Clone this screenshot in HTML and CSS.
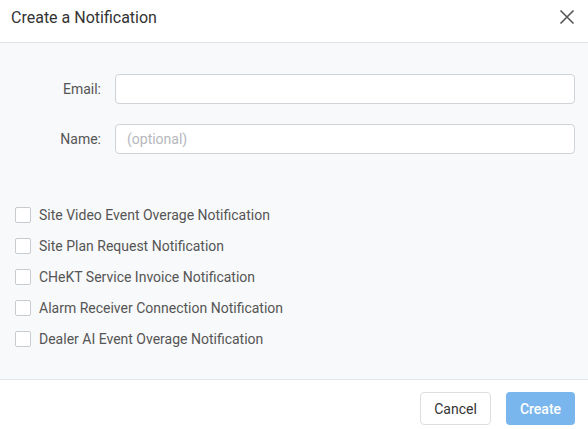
FILE: index.html
```html
<!DOCTYPE html>
<html>
<head>
<meta charset="utf-8">
<link rel="stylesheet" href="styles.css">
</head>
<body>
<div class="modal">
  <div class="header">
    <div class="title">Create a Notification</div>
    <svg class="close" width="16" height="16" viewBox="0 0 16 16"><path d="M1.5 1.5 L14.5 14.5 M14.5 1.5 L1.5 14.5" stroke="#555" stroke-width="1.6" fill="none"/></svg>
  </div>
  <div class="body">
    <div class="form">
      <div class="row"><label class="label">Email:</label><input class="input" type="text"></div>
      <div class="row"><label class="label">Name:</label><input class="input" type="text" placeholder="(optional)"></div>
    </div>
    <div class="checks">
      <div class="check"><span class="box"></span><span>Site Video Event Overage Notification</span></div>
      <div class="check"><span class="box"></span><span>Site Plan Request Notification</span></div>
      <div class="check"><span class="box"></span><span>CHeKT Service Invoice Notification</span></div>
      <div class="check"><span class="box"></span><span>Alarm Receiver Connection Notification</span></div>
      <div class="check"><span class="box"></span><span>Dealer AI Event Overage Notification</span></div>
    </div>
  </div>
  <div class="footer">
    <button class="btn cancel">Cancel</button>
    <button class="btn create">Create</button>
  </div>
</div>
</body>
</html>
```
FILE: styles.css
```css
html, body { margin: 0; padding: 0; background: #fff; }
body { font-family: Roboto, "Liberation Sans", sans-serif; width: 588px; height: 429px; overflow: hidden; }
.modal { display: flex; flex-direction: column; height: 429px; }
.header { height: 43px; border-bottom: 1px solid #e3e5e8; display: flex; align-items: center; justify-content: space-between; padding: 0 13px 0 11px; box-sizing: border-box; }
.title { font-size: 16px; color: #333; margin-top: -8px; }
.close { margin-top: -8px; }
.body { background: #f8f9fa; flex: 1; border-bottom: 1px solid #e3e5e8; padding-top: 31px; }
.form { display: flex; flex-direction: column; gap: 20px; padding-right: 13px; }
.row { display: flex; align-items: center; }
.label { width: 115px; text-align: right; font-size: 14px; color: #555; padding-right: 14px; box-sizing: border-box; flex-shrink: 0; }
.input { flex: 1; height: 30px; box-sizing: border-box; border: 1px solid #cfd2d6; border-radius: 4px; background: #fff; font-family: inherit; font-size: 14px; padding: 0 11px; outline: none; }
.input::placeholder { color: #b5b8bc; }
.checks { margin-top: 53px; padding-left: 15px; display: flex; flex-direction: column; gap: 15px; }
.check { display: flex; align-items: center; height: 16px; font-size: 14px; color: #555; }
.box { width: 16px; height: 16px; border: 1px solid #c8cbcf; border-radius: 2px; background: #fff; box-sizing: border-box; margin-right: 8px; }
.footer { height: 49px; display: flex; justify-content: flex-end; align-items: flex-start; padding: 12px 13px 0 0; box-sizing: border-box; gap: 15px; }
.btn { height: 33px; border-radius: 4px; font-family: inherit; font-size: 14px; padding: 0; }
.cancel { width: 71px; background: #fff; border: 1px solid #dcdfe2; color: #333; }
.create { width: 69px; background: #7ab6ee; border: none; color: #fff; font-weight: 500; }
```
